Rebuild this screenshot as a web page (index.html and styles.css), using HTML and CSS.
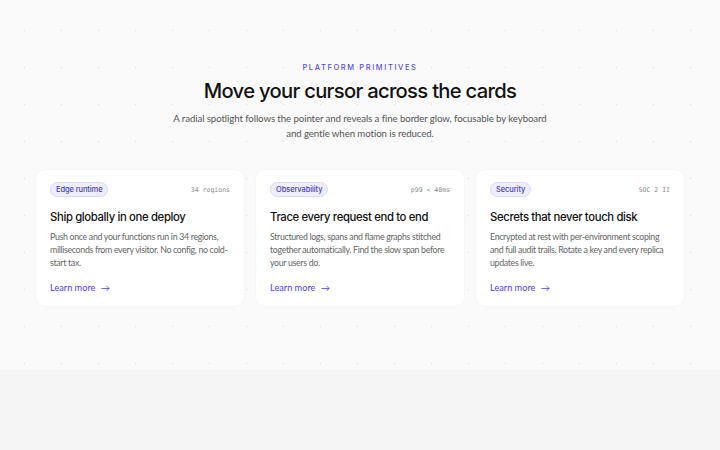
FILE: index.html
```html
<!DOCTYPE html>
<html lang="en">
<head>
    <meta charset="UTF-8">
    <meta name="viewport" content="width=device-width, initial-scale=1.0">
    <title>Platform Primitives</title>
    <link rel="stylesheet" href="styles.css">
</head>
<body>
    <!-- Feature section with dotted backdrop -->
    <section class="features">
        <p class="eyebrow">Platform primitives</p>
        <h1>Move your cursor across the cards</h1>
        <p class="lead">A radial spotlight follows the pointer and reveals a fine border glow, focusable by keyboard and gentle when motion is reduced.</p>

        <div class="cards">
            <article class="card" tabindex="0">
                <div class="card-top">
                    <span class="badge">Edge runtime</span>
                    <span class="meta">34 regions</span>
                </div>
                <h2>Ship globally in one deploy</h2>
                <p>Push once and your functions run in 34 regions, milliseconds from every visitor. No config, no cold-start tax.</p>
                <a href="#" class="more">Learn more <span class="arrow">&rarr;</span></a>
            </article>

            <article class="card" tabindex="0">
                <div class="card-top">
                    <span class="badge">Observability</span>
                    <span class="meta">p99 &lt; 40ms</span>
                </div>
                <h2>Trace every request end to end</h2>
                <p>Structured logs, spans and flame graphs stitched together automatically. Find the slow span before your users do.</p>
                <a href="#" class="more">Learn more <span class="arrow">&rarr;</span></a>
            </article>

            <article class="card" tabindex="0">
                <div class="card-top">
                    <span class="badge">Security</span>
                    <span class="meta">SOC 2 II</span>
                </div>
                <h2>Secrets that never touch disk</h2>
                <p>Encrypted at rest with per-environment scoping and full audit trails. Rotate a key and every replica updates live.</p>
                <a href="#" class="more">Learn more <span class="arrow">&rarr;</span></a>
            </article>
        </div>
    </section>
</body>
</html>
```

FILE: styles.css
```css
/* Base */
body {
    margin: 0;
    font-family: 'Inter', 'Noto Sans', sans-serif;
    background-color: #f5f5f5;
    color: #111;
}

/* Section with dotted grid */
.features {
    height: 370px;
    box-sizing: border-box;
    padding-top: 63px;
    text-align: center;
    background-color: #fafafa;
    background-image: radial-gradient(circle, #e2e2e2 0.7px, transparent 1.1px);
    background-size: 37px 37px;
    background-position: 6px 12px;
}

.eyebrow {
    margin: 0;
    font-size: 7.5px;
    font-weight: 500;
    letter-spacing: 1.6px;
    text-transform: uppercase;
    color: #5b4ed8;
}

h1 {
    margin: 6px 0 0;
    font-size: 20.2px;
    font-weight: 500;
    letter-spacing: -0.7px;
    color: #111;
}

.lead {
    width: 380px;
    margin: 8px auto 0;
    font-family: 'Lato', 'Noto Sans', sans-serif;
    font-size: 9.7px;
    line-height: 15px;
    letter-spacing: -0.1px;
    color: #555;
}

/* Cards */
.cards {
    display: grid;
    grid-template-columns: repeat(3, 1fr);
    gap: 12px;
    width: 648px;
    margin: 29px auto 0;
    text-align: left;
}

.card {
    background-color: #fff;
    border-radius: 9px;
    padding: 12px 14px 11px;
    box-shadow: 0 0 0 1px rgba(0, 0, 0, 0.015);
    outline: none;
}

.card-top {
    display: flex;
    justify-content: space-between;
    align-items: center;
}

.badge {
    font-size: 7.5px;
    font-weight: 500;
    letter-spacing: -0.1px;
    color: #4a3fbf;
    background-color: #eeedfc;
    border: 1px solid #dcd9f6;
    border-radius: 10px;
    padding: 2px 5px;
}

.meta {
    font-family: 'DejaVu Sans Mono', monospace;
    font-size: 6.5px;
    color: #8a8a8a;
}

.card h2 {
    margin: 13px 0 0;
    font-size: 11.3px;
    font-weight: 500;
    letter-spacing: -0.35px;
    color: #111;
}

.card p {
    margin: 6px 0 0;
    font-family: 'Lato', 'Noto Sans', sans-serif;
    font-size: 8.8px;
    line-height: 13px;
    letter-spacing: -0.32px;
    color: #666;
}

.more {
    display: inline-block;
    margin-top: 13px;
    font-family: 'Lato', 'Noto Sans', sans-serif;
    font-size: 9.2px;
    color: #5446d6;
    text-decoration: none;
}

.arrow {
    margin-left: 3px;
}
```
